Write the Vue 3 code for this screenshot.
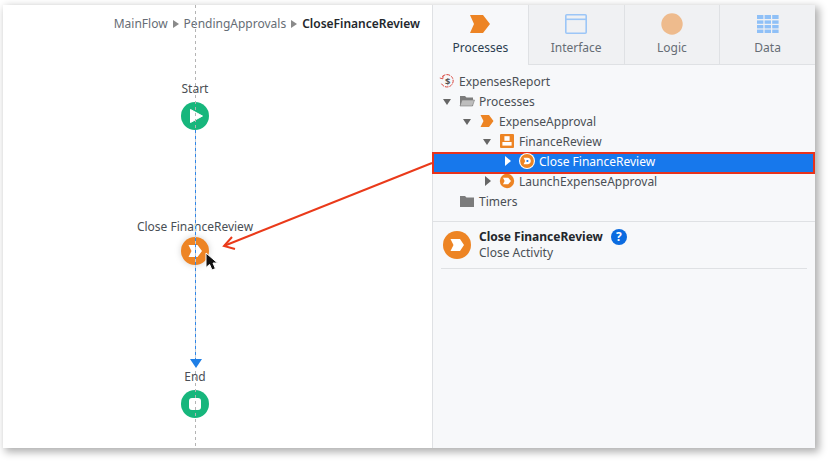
<script setup>
const tabs = [
  { id: 'proc', label: 'Processes', active: true },
  { id: 'ui', label: 'Interface' },
  { id: 'logic', label: 'Logic' },
  { id: 'data', label: 'Data' }
]
const rows = [
  { label: 'ExpensesReport', icon: 'money', depth: 0, caret: 'none' },
  { label: 'Processes', icon: 'folder', depth: 0, caret: 'down' },
  { label: 'ExpenseApproval', icon: 'process', depth: 1, caret: 'down' },
  { label: 'FinanceReview', icon: 'person', depth: 2, caret: 'down' },
  { label: 'Close FinanceReview', icon: 'close', depth: 3, caret: 'right', selected: true },
  { label: 'LaunchExpenseApproval', icon: 'launch', depth: 2, caret: 'right' },
  { label: 'Timers', icon: 'folderClosed', depth: 0, caret: '' }
]
</script>

<template>
  <div class="page">
    <div class="window">
      <section class="canvas">
        <div class="crumbs">
          <span>MainFlow</span>
          <i class="sep"></i>
          <span>PendingApprovals</span>
          <i class="sep"></i>
          <b>CloseFinanceReview</b>
        </div>

        <div class="node n-start">
          <span class="node-label">Start</span>
          <svg width="28" height="28" viewBox="0 0 28 28">
            <circle cx="14" cy="14" r="14" fill="#17b67c" />
            <path d="M9.5 7.5 L21.5 14 L9.5 20.5 Z" fill="#fff" stroke="#fff" stroke-width="1" stroke-linejoin="round" />
          </svg>
        </div>
        <div class="node n-close">
          <span class="node-label">Close FinanceReview</span>
          <svg width="28" height="28" viewBox="0 0 28 28">
            <circle cx="14" cy="14" r="14" fill="#ed8424" />
            <path d="M7.5 8 H16.5 L21 14 L16.5 20 H7.5 L10.5 14 Z" fill="#fff" />
          </svg>
        </div>
        <div class="node n-end">
          <span class="node-label">End</span>
          <svg width="28" height="28" viewBox="0 0 28 28">
            <circle cx="14" cy="14" r="14" fill="#17b67c" />
            <rect x="8" y="8" width="12" height="12" rx="3" fill="#fff" />
          </svg>
        </div>

        <div class="line gray l1"></div>
        <div class="line blue l2"></div>
        <div class="line gray l3"></div>
        <div class="arrowhead"></div>

        <svg class="cursor" width="16" height="20" viewBox="0 0 16 20">
          <path d="M1 1 V15.5 L4.6 12.4 L7 18 L10.4 16.6 L8 11 H12.5 Z" fill="#111" stroke="#fff" stroke-width="1" />
        </svg>
      </section>

      <aside class="panel">
        <nav class="tabs">
          <div v-for="t in tabs" :key="t.id" class="tab" :class="{ active: t.active }">
            <svg class="tab-icon" width="24" height="24" viewBox="0 0 24 24">
              <path v-if="t.id === 'proc'" d="M2 3 H15 L22 12 L15 21 H2 L6 12 Z" fill="#ed8424" />
              <g v-else-if="t.id === 'ui'" fill="none" stroke="#9cc6f7" stroke-width="1.6">
                <rect x="1.8" y="2.8" width="20.4" height="18.4" rx="1" />
                <path d="M2 7.3 H22" />
              </g>
              <circle v-else-if="t.id === 'logic'" cx="12" cy="12" r="10.7" fill="#eebb8d" />
              <g v-else fill="#8fc0f7">
                <rect x="1" y="3" width="6.4" height="4" /><rect x="8.6" y="3" width="6.4" height="4" /><rect x="16.2" y="3" width="6.4" height="4" />
                <rect x="1" y="8.4" width="6.4" height="3.4" /><rect x="8.6" y="8.4" width="6.4" height="3.4" /><rect x="16.2" y="8.4" width="6.4" height="3.4" />
                <rect x="1" y="13" width="6.4" height="3.4" /><rect x="8.6" y="13" width="6.4" height="3.4" /><rect x="16.2" y="13" width="6.4" height="3.4" />
                <rect x="1" y="17.6" width="6.4" height="3.4" /><rect x="8.6" y="17.6" width="6.4" height="3.4" /><rect x="16.2" y="17.6" width="6.4" height="3.4" />
              </g>
            </svg>
            <span>{{ t.label }}</span>
          </div>
        </nav>

        <ul class="tree">
          <li v-for="r in rows" :key="r.label" class="row" :class="{ selected: r.selected }"
              :style="{ paddingLeft: 6 + r.depth * 20 + 'px' }">
            <span class="caret" :class="r.caret"></span>
            <svg class="row-icon" width="16" height="16" viewBox="0 0 16 16">
              <g v-if="r.icon === 'money'" fill="none" stroke="#d9433a" stroke-width="1">
                <path d="M3.4 3.6 A6.2 6.2 0 1 1 2.4 10.5" stroke-dasharray="3.5 1" />
                <path d="M0.8 5 L3.8 5.8 L4.2 2.4" stroke-width="0.9" />
                <text x="8.8" y="11.6" font-size="9.5" font-weight="700" fill="#555" stroke="none" text-anchor="middle" font-family="Noto Sans, sans-serif">$</text>
              </g>
              <g v-else-if="r.icon === 'folder'">
                <path d="M1 3 H6 L7.5 4.5 H14 V13 H1 Z" fill="#7c7c7c" />
                <path d="M3 7 H15.5 L13.5 13 H1 Z" fill="#bdbdbd" stroke="#7c7c7c" stroke-width="0.6" />
              </g>
              <path v-else-if="r.icon === 'folderClosed'" d="M1 3 H6 L7.5 4.5 H15 V14 H1 Z" fill="#7c7c7c" />
              <path v-else-if="r.icon === 'process'" d="M1.5 2 H10 L14.5 8 L10 14 H1.5 L4.5 8 Z" fill="#ed8424" />
              <g v-else-if="r.icon === 'person'">
                <rect x="1" y="1" width="14" height="14" rx="1" fill="#ed8424" />
                <rect x="5.4" y="3.2" width="5.2" height="4.6" fill="#fff" />
                <rect x="3.4" y="9" width="9.2" height="3.6" fill="#fff" />
              </g>
              <g v-else-if="r.icon === 'close'">
                <circle cx="8" cy="8" r="8" fill="#fff" />
                <circle cx="8" cy="8" r="6.9" fill="#ed8424" />
                <path d="M4.6 4.8 H8.5 C10.6 4.8 11.8 6.2 11.8 8 C11.8 9.8 10.6 11.2 8.5 11.2 H4.6 L6.2 8 Z" fill="#fff" />
                <circle cx="8.4" cy="8" r="1.1" fill="#1573e6" />
              </g>
              <g v-else-if="r.icon === 'launch'">
                <circle cx="8" cy="8" r="7.2" fill="#ed8424" />
                <path d="M4 4.8 H9.2 L12 8 L9.2 11.2 H4 L5.6 8 Z" fill="#fff" />
              </g>
            </svg>
            <span class="row-label">{{ r.label }}</span>
          </li>
        </ul>

        <div class="detail">
          <div class="detail-inner">
            <svg width="28" height="28" viewBox="0 0 28 28">
              <circle cx="14" cy="14" r="14" fill="#ed8424" />
              <path d="M7.5 8 H17 L21 14 L17 20 H7.5 L10.5 14 Z" fill="#fff" />
            </svg>
            <div class="detail-text">
              <div class="detail-title">
                <b>Close FinanceReview</b>
                <span class="help">?</span>
              </div>
              <div class="detail-sub">Close Activity</div>
            </div>
          </div>
        </div>
      </aside>

      <svg class="annot" width="240" height="110" viewBox="0 0 240 110">
        <path d="M216 10 L9 92.5" fill="none" stroke="#ea3a1a" stroke-width="2" />
        <path d="M16 84 L8 93 L19 96" fill="none" stroke="#ea3a1a" stroke-width="2" />
      </svg>
    </div>
  </div>
</template>

<style>
html, body { margin: 0; background: #fff; }
</style>

<style scoped>
.page {
  width: 830px;
  height: 463px;
  padding: 5px 15px 15px 3px;
  box-sizing: border-box;
  overflow: hidden;
  font-family: "Noto Sans", sans-serif;
  font-size: 12px;
  color: #4a4f55;
}
.window {
  position: relative;
  display: flex;
  height: 443px;
  background: #fff;
  box-shadow: 3px 3px 8px 1px rgba(0, 0, 0, 0.32);
}
.canvas {
  position: relative;
  width: 429px;
  flex: none;
  overflow: hidden;
}
.crumbs {
  display: flex;
  justify-content: flex-end;
  align-items: center;
  gap: 5px;
  padding: 10px 12px 0 0;
  line-height: 18px;
  color: #666d75;
}
.crumbs b { font-weight: 600; color: #23272c; }
.sep {
  width: 0; height: 0;
  border-left: 6px solid #8a8a8a;
  border-top: 4px solid transparent;
  border-bottom: 4px solid transparent;
}
.line { position: absolute; left: 192px; width: 1px; }
.gray { background: repeating-linear-gradient(#b4b4b4 0 3px, transparent 3px 6px); }
.blue { background: repeating-linear-gradient(#2f86e8 0 3px, #c3ccd6 3px 6px); }
.l1 { top: 0; height: 125px; }
.l2 { top: 125px; height: 232px; }
.l3 { top: 366px; height: 77px; }
.arrowhead {
  position: absolute;
  left: 187px;
  top: 354px;
  width: 0; height: 0;
  border-top: 9px solid #1f7fe6;
  border-left: 6px solid transparent;
  border-right: 6px solid transparent;
}
.node {
  position: absolute;
  left: 92px;
  width: 200px;
  display: flex;
  flex-direction: column;
  align-items: center;
}
.node svg { display: block; }
.node-label { line-height: 18px; color: #4a4f55; margin-bottom: 4px; }
.n-start { top: 75px; }
.n-close { top: 213px; }
.n-close .node-label { margin-bottom: 1px; }
.n-close svg { filter: drop-shadow(0 0 3px rgba(0,0,0,.18)); }
.n-end { top: 363px; }
.cursor { position: absolute; left: 202px; top: 247px; }

.panel {
  flex: 1;
  display: flex;
  flex-direction: column;
  background: #f7f8fa;
  border-left: 1px solid #dfe1e4;
}
.tabs { display: flex; height: 60px; flex: none; }
.tab {
  flex: 1;
  box-sizing: border-box;
  display: flex;
  flex-direction: column;
  align-items: center;
  padding-top: 7px;
  background: #f0f1f3;
  border-left: 1px solid #dfe1e4;
  border-bottom: 1px solid #dfe1e4;
  color: #666d75;
  font-size: 12px;
  line-height: 17px;
}
.tab:first-child { border-left: 0; }
.tab.active { background: #f7f8fa; border-bottom-color: transparent; color: #2c3e50; }
.tab-icon { display: block; margin-bottom: 3px; }
.tree {
  list-style: none;
  margin: 0;
  padding: 6px 0 10px;
  border-bottom: 1px solid #dfe1e4;
}
.row {
  box-sizing: border-box;
  height: 20px;
  display: flex;
  align-items: center;
  color: #4a4f55;
}
.caret { width: 20px; height: 8px; position: relative; flex: none; }
.caret.none { width: 0; }
.caret.down::before {
  content: ""; position: absolute; left: 4px; top: 2px;
  border-top: 6px solid #666; border-left: 4.5px solid transparent; border-right: 4.5px solid transparent;
}
.caret.right::before {
  content: ""; position: absolute; left: 6px; top: -1px;
  border-left: 6px solid #666; border-top: 5px solid transparent; border-bottom: 5px solid transparent;
}
.row-icon { flex: none; margin-right: 4px; }
.row.selected {
  position: relative;
  isolation: isolate;
  color: #fff;
}
.row.selected::before {
  content: "";
  position: absolute;
  z-index: -1;
  left: -1px;
  right: 0;
  top: 1px;
  bottom: -3px;
  box-sizing: border-box;
  background: #1778ec;
  border: 2px solid #e8331c;
}
.row.selected .caret.right::before { border-left-color: #fff; }
.detail { padding: 0 8px; }
.detail-inner {
  display: flex;
  align-items: flex-start;
  gap: 8px;
  height: 47px;
  box-sizing: border-box;
  padding: 9px 0 0 2px;
  border-bottom: 1px solid #dfe1e4;
}
.detail-inner svg { flex: none; }
.detail-text { line-height: 16px; margin-top: -2px; }
.detail-title { display: flex; align-items: center; gap: 8px; }
.detail-title b { font-weight: 700; color: #23272c; }
.help {
  width: 16px; height: 16px; border-radius: 50%;
  background: #0b6be0; color: #fff; font-weight: 700; font-size: 12px;
  display: flex; align-items: center; justify-content: center;
}
.detail-sub { color: #4a4f55; }
.annot { position: absolute; left: 213px; top: 148px; pointer-events: none; }
</style>
